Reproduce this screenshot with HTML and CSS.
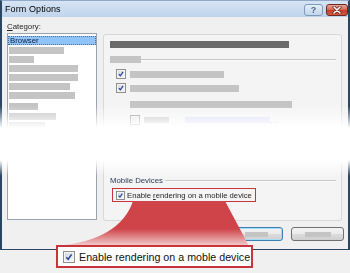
FILE: index.html
```html
<!DOCTYPE html>
<html>
<head>
<meta charset="utf-8">
<title>Form Options</title>
<link rel="stylesheet" href="styles.css">
</head>
<body>
<div class="stage">
  <div class="win-top">
    <div class="titlebar">
      <span class="title">Form Options</span>
      <div class="caption-btns">
        <span class="cbtn help">?</span>
        <span class="cbtn close"><svg width="10" height="8" viewBox="0 0 10 8"><path d="M2 1 L8 7 M8 1 L2 7" stroke="#5a1a12" stroke-width="3" stroke-linecap="round"/><path d="M2 1 L8 7 M8 1 L2 7" stroke="#fff" stroke-width="1.6" stroke-linecap="round"/></svg></span>
      </div>
    </div>
    <div class="client">
      <div class="left">
        <div class="label"><u>C</u>ategory:</div>
        <div class="listbox">
          <div class="item sel">Browser</div>
          <div class="ph lb lb1"></div>
          <div class="ph lb lb2"></div>
          <div class="ph lb lb3"></div>
          <div class="ph lb lb4"></div>
          <div class="ph lb lb5"></div>
          <div class="ph lb lb6"></div>
          <div class="ph lb lb7"></div>
          <div class="ph lb lb8"></div>
          <div class="ph lb lb9"></div>
        </div>
      </div>
      <div class="panel">
        <div class="heading"></div>
        <div class="sep"><span class="ph sep-label"></span><span class="line"></span></div>
        <div class="row row1"><span class="chk"><svg viewBox="0 0 10 10"><path d="M2.3 5.2 L4.2 7.3 L7.6 2.4" fill="none" stroke="#26439a" stroke-width="1.6"/></svg></span><span class="ph r1"></span></div>
        <div class="row row2"><span class="chk"><svg viewBox="0 0 10 10"><path d="M2.3 5.2 L4.2 7.3 L7.6 2.4" fill="none" stroke="#26439a" stroke-width="1.6"/></svg></span><span class="ph r2"></span></div>
        <div class="row row3"><span class="ph r3"></span></div>
        <div class="row row4"><span class="chk"></span><span class="ph r4"></span><span class="link"></span><span class="dots"></span></div>
      </div>
    </div>
  </div>

  <div class="win-bottom">
    <div class="client2">
      <div class="listbox cont"></div>
      <div class="panel cont">
        <div class="group"><span class="group-label">Mobile Devices</span><span class="line"></span></div>
        <div class="hl">
          <span class="chk"><svg viewBox="0 0 10 10"><path d="M2.3 5.2 L4.2 7.3 L7.6 2.4" fill="none" stroke="#26439a" stroke-width="1.6"/></svg></span>
          <span class="hl-text">Enable <u>r</u>endering on a mobile device</span>
        </div>
      </div>
    </div>
    <div class="buttons">
      <div class="btn default"><span class="ph bt1"></span></div>
      <div class="btn"><span class="ph bt2"></span></div>
    </div>
  </div>
  <div class="below"></div>

  <svg class="swoosh" width="350" height="273" viewBox="0 0 350 273">
    <defs>
      <linearGradient id="rg" x1="0" y1="201" x2="0" y2="246" gradientUnits="userSpaceOnUse">
        <stop offset="0" stop-color="#cf4449"/>
        <stop offset="0.62" stop-color="#cf4449"/>
        <stop offset="1" stop-color="#f3d0d1"/>
      </linearGradient>
    </defs>
    <path d="M133 201 L225 201 L249 246 L57 246 Q120 240 133 201 Z" fill="url(#rg)"/>
  </svg>

  <div class="callout">
    <span class="chk big"><svg viewBox="0 0 10 10"><path d="M2.3 5.2 L4.2 7.3 L7.6 2.4" fill="none" stroke="#26439a" stroke-width="1.5"/></svg></span>
    <span class="callout-text">Enable rendering on a moble device</span>
  </div>
</div>
</body>
</html>
```

FILE: styles.css
```css
* { box-sizing: border-box; }
html, body { margin: 0; padding: 0; }
body {
  width: 350px;
  height: 273px;
  overflow: hidden;
  background: #ffffff;
  font-family: "Liberation Sans", Arial, sans-serif;
  color: #1e1e1e;
}
.stage {
  position: relative;
  width: 350px;
  height: 273px;
  background: #ffffff;
}

/* ---------- top slice ---------- */
.win-top {
  height: 130px;
  -webkit-mask-image: linear-gradient(to bottom, #000 106px, transparent 128px);
  mask-image: linear-gradient(to bottom, #000 106px, transparent 128px);
}
.titlebar {
  height: 17px;
  display: flex;
  align-items: center;
  justify-content: space-between;
  background: linear-gradient(#d6e4f4, #bfd4ec);
  border-left: 2px solid #2b4661;
  border-right: 2px solid #2b4661;
  border-top: 1px solid #8fa9c6;
  padding-left: 3px;
}
.title {
  font-size: 9px;
  color: #000;
  letter-spacing: 0.1px;
}
.caption-btns {
  display: flex;
  gap: 3px;
  align-self: flex-start;
  margin-top: 3px;
}
.cbtn {
  height: 12px;
  border-radius: 3px;
  display: flex;
  align-items: center;
  justify-content: center;
}
.help {
  width: 19px;
  border: 1px solid #7f9bbb;
  background: linear-gradient(#e4eef9, #c3d6ec);
  font-size: 9px;
  font-weight: bold;
  color: #4e6582;
}
.close {
  width: 22px;
  border: 1px solid #6d2a22;
  background: linear-gradient(#e9a596 0%, #d5614b 50%, #c13f28 51%, #d4593f 100%);
}

.client {
  height: 113px;
  display: flex;
  background: #f0f0f0;
  border-left: 2px solid #2b4661;
  border-right: 2px solid #2b4661;
}
.left {
  margin-left: 5px;
  width: 90px;
}
.label {
  margin-top: 4px;
  height: 12px;
  font-size: 7.8px;
  line-height: 12px;
}
.listbox {
  height: 200px;
  background: #fff;
  border: 1px solid #9da3ab;
  padding-top: 2px;
}
.item {
  height: 9px;
  font-size: 7.8px;
  line-height: 8px;
}
.item.sel {
  background: #8fc3fa;
  border: 1px dotted #4d6e92;
  color: #0e1f3a;
  padding-left: 1px;
  line-height: 7px;
}
.ph { background: #c4c4c4; display: block; }
.lb { height: 7px; margin-left: 1px; margin-top: 2px; }
.lb1 { width: 55px; }
.lb2 { width: 25px; }
.lb3 { width: 69px; }
.lb4 { width: 69px; }
.lb5 { width: 61px; }
.lb6 { width: 66px; }
.lb7 { width: 29px; margin-top: 4px; }
.lb8 { width: 47px; margin-top: 3px; }
.lb9 { width: 36px; }

.panel {
  margin-left: 6px;
  margin-top: 17px;
  width: 239px;
  height: 200px;
  background: #f4f4f4;
  border: 1px solid #d8d8d8;
  border-radius: 3px;
  padding: 6px 5px 0 6px;
}
.heading {
  width: 179px;
  height: 7px;
  background: #6a6a6a;
}
.sep {
  display: flex;
  align-items: center;
  margin-top: 8px;
  height: 7px;
}
.sep-label { width: 31px; height: 7px; }
.line {
  flex: 1;
  height: 2px;
  border-top: 1px solid #c9c9c9;
  border-bottom: 1px solid #fbfbfb;
}
.row {
  display: flex;
  align-items: center;
  height: 10px;
}
.row1 { margin-top: 6px; padding-left: 6px; }
.row2 { margin-top: 4px; padding-left: 6px; }
.row3 { margin-top: 6px; padding-left: 20px; }
.row4 { margin-top: 6px; padding-left: 20px; }
.row .ph { height: 7px; }
.r1 { width: 94px; margin-left: 4px; }
.r2 { width: 109px; margin-left: 4px; }
.r3 { width: 162px; }
.r4 { width: 25px; margin-left: 4px; height: 6px !important; }
.link {
  display: block;
  width: 85px;
  height: 6px;
  margin-left: 16px;
  background: #d8d8ff;
}
.dots {
  display: block;
  width: 8px;
  height: 1px;
  margin-top: 5px;
  border-bottom: 1px dotted #b8b8f0;
}

.chk {
  width: 10px;
  height: 10px;
  flex: none;
  border: 1px solid #8f8f8f;
  background: linear-gradient(135deg, #d2d6dc, #f8f8f8);
  box-shadow: inset 0 0 0 1px #f4f4f4;
  display: flex;
}
.chk svg { width: 100%; height: 100%; }

/* ---------- bottom slice ---------- */
.win-bottom {
  margin-top: 30px;
  height: 90px;
  background: #f0f0f0;
  border-left: 2px solid #2b4661;
  border-right: 2px solid #2b4661;
  border-bottom: 1px solid #2b4661;
  -webkit-mask-image: linear-gradient(to bottom, transparent 0, #000 16px);
  mask-image: linear-gradient(to bottom, transparent 0, #000 16px);
}
.below {
  height: 23px;
  background: #f0f0f0;
}
.client2 {
  display: flex;
  height: 61px;
}
.listbox.cont {
  margin-left: 5px;
  width: 90px;
  height: 60px;
  border-top: none;
}
.panel.cont {
  margin-top: 0;
  height: 61px;
  border-top: none;
  border-radius: 0 0 3px 3px;
  padding: 16px 5px 0 6px;
}
.group {
  display: flex;
  align-items: center;
  height: 9px;
}
.group-label {
  font-size: 7.8px;
  line-height: 9px;
  color: #2d3b52;
  margin-right: 2px;
}
.hl {
  margin-top: 3px;
  margin-left: 2px;
  width: 144px;
  height: 14px;
  border: 1px solid #c8343c;
  display: flex;
  align-items: center;
  padding-left: 3px;
  gap: 2px;
}
.hl .chk { width: 9px; height: 9px; }
.hl-text {
  font-size: 7.7px;
  white-space: nowrap;
  color: #1e1e1e;
}
.buttons {
  display: flex;
  justify-content: flex-end;
  gap: 8px;
  margin-top: 6px;
  padding-right: 4px;
}
.btn {
  width: 53px;
  height: 14px;
  border: 1px solid #707070;
  border-radius: 3px;
  background: linear-gradient(#f3f3f3 0%, #ebebeb 48%, #dcdcdc 52%, #cfcfcf 100%);
  display: flex;
  align-items: center;
  justify-content: center;
}
.btn.default {
  border-color: #3c7fb1;
  box-shadow: inset 0 0 0 1px #a4dcf5;
}
.bt1 { width: 23px; height: 5px; }
.bt2 { width: 26px; height: 5px; }

/* ---------- overlays ---------- */
.swoosh {
  position: absolute;
  left: 0;
  top: 0;
  pointer-events: none;
}
.callout {
  position: absolute;
  left: 56px;
  top: 245px;
  width: 197px;
  height: 23px;
  background: #fff;
  border: 2px solid #c8343c;
  display: flex;
  align-items: center;
  padding-left: 5px;
  gap: 4px;
}
.chk.big { width: 12px; height: 12px; }
.callout-text {
  font-size: 10.7px;
  white-space: nowrap;
  color: #111;
}
```
